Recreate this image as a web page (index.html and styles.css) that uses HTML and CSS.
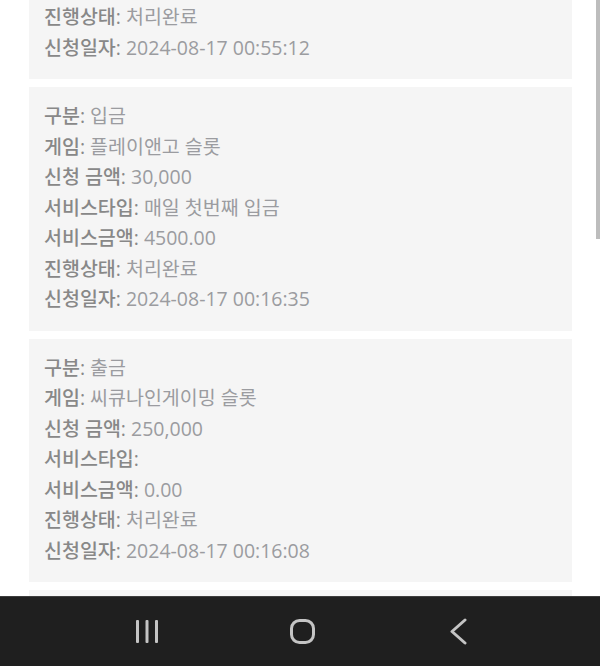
FILE: index.html
```html
<!DOCTYPE html>
<html lang="ko">
<head>
    <meta charset="UTF-8">
    <meta name="viewport" content="width=device-width, initial-scale=1.0">
    <title>신청 내역</title>
    <link rel="stylesheet" href="styles.css">
</head>
<body>
    <div class="screen">
        <main class="history">
            <div class="scrollbar"></div>

            <div class="history-item history-item--cut">
                <div class="row"><span class="label">진행상태:</span> 처리완료</div>
                <div class="row"><span class="label">신청일자:</span> 2024-08-17 00:55:12</div>
            </div>

            <div class="history-item">
                <div class="row"><span class="label">구분:</span> 입금</div>
                <div class="row"><span class="label">게임:</span> 플레이앤고 슬롯</div>
                <div class="row"><span class="label">신청 금액:</span> 30,000</div>
                <div class="row"><span class="label">서비스타입:</span> 매일 첫번째 입금</div>
                <div class="row"><span class="label">서비스금액:</span> 4500.00</div>
                <div class="row"><span class="label">진행상태:</span> 처리완료</div>
                <div class="row"><span class="label">신청일자:</span> 2024-08-17 00:16:35</div>
            </div>

            <div class="history-item">
                <div class="row"><span class="label">구분:</span> 출금</div>
                <div class="row"><span class="label">게임:</span> 씨큐나인게이밍 슬롯</div>
                <div class="row"><span class="label">신청 금액:</span> 250,000</div>
                <div class="row"><span class="label">서비스타입:</span></div>
                <div class="row"><span class="label">서비스금액:</span> 0.00</div>
                <div class="row"><span class="label">진행상태:</span> 처리완료</div>
                <div class="row"><span class="label">신청일자:</span> 2024-08-17 00:16:08</div>
            </div>

            <div class="history-item"></div>
        </main>

        <!-- android navigation bar -->
        <nav class="nav-bar">
            <div class="nav-btn">
                <svg width="25" height="25" viewBox="0 0 25 25">
                    <rect x="2" y="1" width="3" height="23" rx="1" fill="#c4c4c4"/>
                    <rect x="11.5" y="1" width="3" height="23" rx="1" fill="#c4c4c4"/>
                    <rect x="21" y="1" width="3" height="23" rx="1" fill="#c4c4c4"/>
                </svg>
            </div>
            <div class="nav-btn">
                <svg width="27" height="27" viewBox="0 0 27 27">
                    <rect x="2.5" y="2.5" width="22" height="22" rx="8" fill="none" stroke="#c4c4c4" stroke-width="3"/>
                </svg>
            </div>
            <div class="nav-btn">
                <svg width="19" height="27" viewBox="0 0 19 27">
                    <polyline points="16,2 3,13.5 16,25" fill="none" stroke="#c4c4c4" stroke-width="3" stroke-linecap="round" stroke-linejoin="round"/>
                </svg>
            </div>
        </nav>
    </div>
</body>
</html>
```

FILE: styles.css
```css
/* Deposit / withdrawal history, mobile view */
body {
    margin: 0;
    padding: 0;
    background-color: #ffffff;
    font-family: "Open Sans", "Noto Sans CJK KR", sans-serif;
}

.screen {
    display: flex;
    flex-direction: column;
    height: 666px;
    overflow: hidden;
}

.history {
    position: relative;
    flex: 1;
    overflow: hidden;
    padding: 0 28px 0 29px;
}

.scrollbar {
    position: absolute;
    top: 0;
    right: 0;
    width: 4px;
    height: 239px;
    background-color: #bdbdbd;
}

.history-item {
    background-color: #f5f5f5;
    padding: 14px 15px 16px;
    margin-bottom: 8px;
}

.history-item--cut {
    padding-top: 2px;
}

.row {
    font-size: 19.5px;
    line-height: 30.5px;
    color: #9b9ca0;
    white-space: nowrap;
}

.label {
    font-weight: 500;
    color: #888888;
}

.nav-bar {
    display: flex;
    height: 69px;
    padding-left: 68px;
    border-top: 1px solid #3d3d3d;
    background-color: #1f1f1f;
}

.nav-btn {
    display: flex;
    align-items: center;
    justify-content: center;
    width: 156px;
}
```
